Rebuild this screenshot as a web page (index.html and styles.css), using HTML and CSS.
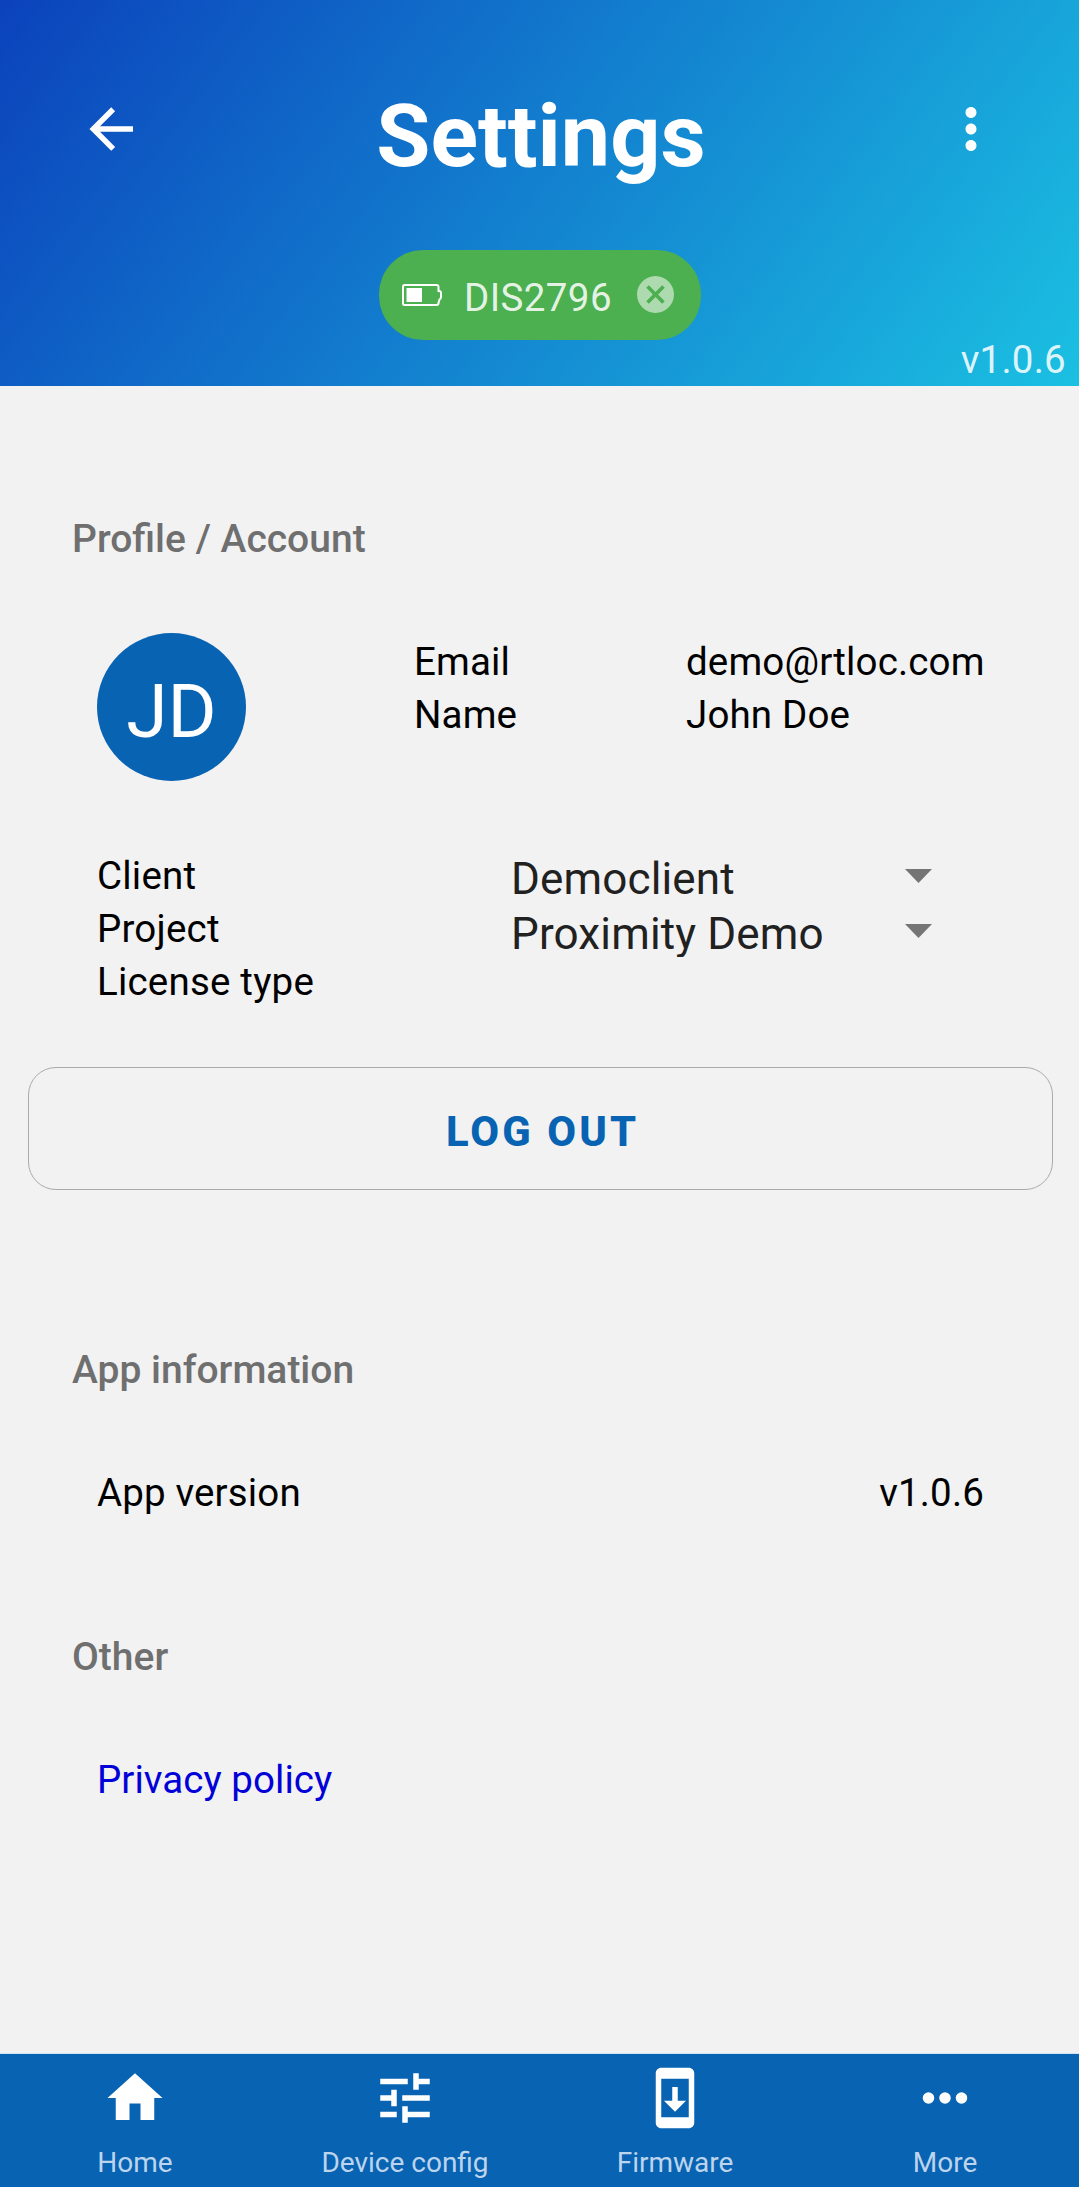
FILE: index.html
```html
<!DOCTYPE html>
<html lang="en">
<head>
<meta charset="utf-8">
<title>Settings</title>
<link rel="stylesheet" href="styles.css">
</head>
<body>
<div class="app">
  <header class="header">
    <div class="bar">
      <svg class="icon" viewBox="0 0 24 24"><path d="M20,11V13H8L13.5,18.5L12.08,19.92L4.16,12L12.08,4.08L13.5,5.5L8,11H20Z"/></svg>
      <h1 class="title">Settings</h1>
      <svg class="icon" viewBox="0 0 24 24"><path d="M12 8c1.1 0 2-.9 2-2s-.9-2-2-2-2 .9-2 2 .9 2 2 2zm0 2c-1.1 0-2 .9-2 2s.9 2 2 2 2-.9 2-2-.9-2-2-2zm0 6c-1.1 0-2 .9-2 2s.9 2 2 2 2-.9 2-2-.9-2-2-2z"/></svg>
    </div>
    <div class="chip">
      <svg class="battery" viewBox="0 0 40 22"><path d="M2.5 1H34.5Q36.5 1 36.5 3V7H37Q39 7 39 9V13Q39 15 37.500 15.500L36.500 19Q36.500 21 34.500 21H2.500Q1 21 1 19.500V2.500Q1 1 2.500 1Z" fill="none" stroke="#fff" stroke-width="2"/><rect x="4.500" y="4" width="15.500" height="14"/></svg>
      <span class="chip-label">DIS2796</span>
      <svg class="chip-close" viewBox="2 2 20 20"><path d="M12 2C6.470 2 2 6.470 2 12s4.470 10 10 10 10-4.470 10-10S17.530 2 12 2zm5 13.590L15.590 17 12 13.410 8.410 17 7 15.590 10.590 12 7 8.410 8.410 7 12 10.590 15.590 7 17 8.410 13.410 12 17 15.590z"/></svg>
    </div>
    <div class="version">v1.0.6</div>
  </header>

  <main class="content">
    <h2 class="heading">Profile / Account</h2>
    <section class="profile">
      <div class="avatar">JD</div>
      <dl class="facts">
        <dt>Email</dt><dd>demo@rtloc.com</dd>
        <dt>Name</dt><dd>John Doe</dd>
      </dl>
    </section>
    <section class="account">
      <div class="labels"><div>Client</div><div>Project</div><div>License type</div></div>
      <div class="pickers">
        <div class="picker"><span>Democlient</span><svg class="caret" viewBox="0 0 27 14"><path d="M0 0H27L13.500 14Z"/></svg></div>
        <div class="picker"><span>Proximity Demo</span><svg class="caret" viewBox="0 0 27 14"><path d="M0 0H27L13.500 14Z"/></svg></div>
      </div>
    </section>
    <button class="logout">LOG OUT</button>
    <h2 class="heading heading-app">App information</h2>
    <div class="row"><span>App version</span><span>v1.0.6</span></div>
    <h2 class="heading heading-other">Other</h2>
    <div class="row"><a class="link" href="#">Privacy policy</a></div>
  </main>

  <nav class="nav">
    <div class="tab"><svg class="icon" viewBox="0 0 24 24"><path d="M10,20V14H14V20H19V12H22L12,3L2,12H5V20H10Z"/></svg><span>Home</span></div>
    <div class="tab"><svg class="icon" viewBox="0 0 24 24"><path d="M3 17v2h6v-2H3zM3 5v2h10V5H3zm10 16v-2h8v-2h-8v-2h-2v6h2zM7 9v2H3v2h4v2h2V9H7zm14 4v-2H11v2h10zm-6-4h2V7h4V5h-4V3h-2v6z"/></svg><span>Device config</span></div>
    <div class="tab"><svg class="icon" viewBox="0 0 24 24"><path d="M17 1.010L7 1c-1.100 0-2 .9-2 2v18c0 1.100.9 2 2 2h10c1.100 0 2-.9 2-2V3c0-1.100-.9-1.990-2-1.990zM17 19H7V5h10v14zm-1-6h-3V8h-2v5H8l4 4 4-4z"/></svg><span>Firmware</span></div>
    <div class="tab"><svg class="icon" viewBox="0 0 24 24"><circle cx="6" cy="12" r="2.100"/><circle cx="12" cy="12" r="2.100"/><circle cx="18" cy="12" r="2.100"/></svg><span>More</span></div>
  </nav>
</div>
</body>
</html>
```

FILE: styles.css
```css
* { box-sizing: border-box; margin: 0; padding: 0; }
body { background: #fff; font-family: Roboto, sans-serif; font-size: 38.5px; line-height: 53px; letter-spacing: .15px; color: #000; }
.app { height: 2187px; display: flex; flex-direction: column; background: #f2f2f2; }
.icon { width: 66px; height: 66px; fill: #fff; flex: none; display: block; }

.header { height: 386px; padding-top: 84px; display: flex; flex-direction: column; align-items: center; background: linear-gradient(127deg, #0b42bc, #1bc0e2); color: #fff; }
.bar { width: 100%; height: 104px; padding: 0 75px 0 78px; display: flex; justify-content: space-between; align-items: flex-start; }
.bar .icon { margin-top: 12px; }
.title { font-size: 88px; line-height: 104px; font-weight: 700; letter-spacing: 0; }
.chip { width: 322px; height: 90px; margin-top: 62px; padding: 0 26.5px 0 23px; border-radius: 44px; background: #4caf50; display: flex; align-items: center; flex: none; }
.battery { width: 40px; height: 22px; fill: #fff; }
.chip-label { margin-left: 22.5px; padding-top: 5px; letter-spacing: .4px; color: rgba(255,255,255,.87); }
.chip-close { width: 37px; height: 37px; margin-left: auto; margin-top: -1px; fill: rgba(255,255,255,.54); }
.version { align-self: flex-end; margin: -3px 13px 0 0; line-height: 46px; letter-spacing: .25px; color: rgba(255,255,255,.87); }

.content { flex: 1; padding: 126px 26px 0 28px; }
.heading { height: 53px; padding-left: 44px; font-size: 39px; line-height: 55px; font-weight: 500; letter-spacing: 0; color: #6f6f6f; }
.profile { margin-top: 68px; padding-left: 69px; display: flex; height: 149px; }
.avatar { width: 149px; height: 148px; border-radius: 50%; background: #0863b2; color: #fff; font-size: 75px; line-height: 156px; letter-spacing: 0; text-align: center; }
.facts { margin: 2px 0 0 168px; display: grid; grid-template-columns: 272px auto; grid-auto-rows: 53px; align-content: start; }
.account { margin-top: 67px; padding-left: 69px; display: flex; height: 159px; }
.labels { width: 414px; letter-spacing: .2px; }
.pickers { width: 421px; height: 108px; overflow: hidden; font-size: 44px; color: #212121; }
.picker { height: 55px; line-height: 61px; display: flex; justify-content: space-between; }
.caret { width: 27px; height: 14px; margin-top: 20px; fill: #757575; }
.logout { display: block; width: 100%; height: 123px; margin-top: 59px; padding: 6px 0 0 4px; border: 1px solid #aaa; border-radius: 28px; background: none; color: #0863b2; font: 800 41.75px Roboto, sans-serif; letter-spacing: 3.1px; }
.heading-app { margin-top: 153px; }
.row { margin-top: 70px; padding: 0 69px; display: flex; justify-content: space-between; }
.heading-other { margin-top: 111px; }
.link { color: #0000d8; text-decoration: none; letter-spacing: .05px; }

.nav { height: 133px; display: grid; grid-template-columns: repeat(4, 270px); background: #0863b2; box-shadow: 0 -1px 0 #cfe4f5; overflow: hidden; }
.tab { padding-top: 11px; display: flex; flex-direction: column; align-items: center; font-size: 28px; line-height: 36px; letter-spacing: 0; color: #bcd4ec; }
.tab span { margin-top: 14px; }
```
